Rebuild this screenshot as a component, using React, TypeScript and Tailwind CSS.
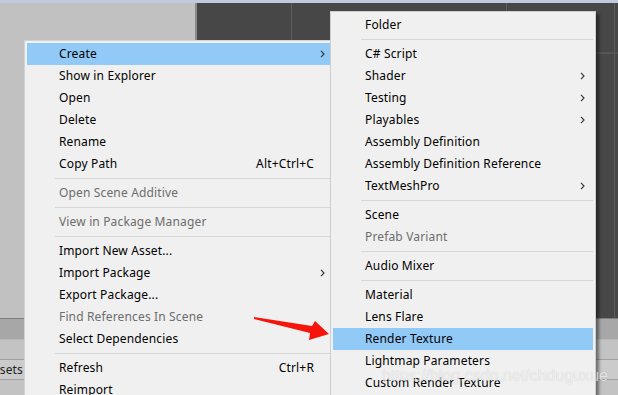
import React from 'react';

type Item =
  | 'sep'
  | {
      label: string;
      shortcut?: string;
      sub?: boolean;
      disabled?: boolean;
      active?: boolean;
    };

const mainItems: Item[] = [
  { label: 'Create', sub: true, active: true },
  { label: 'Show in Explorer' },
  { label: 'Open' },
  { label: 'Delete' },
  { label: 'Rename' },
  { label: 'Copy Path', shortcut: 'Alt+Ctrl+C' },
  'sep',
  { label: 'Open Scene Additive', disabled: true },
  'sep',
  { label: 'View in Package Manager', disabled: true },
  'sep',
  { label: 'Import New Asset...' },
  { label: 'Import Package', sub: true },
  { label: 'Export Package...' },
  { label: 'Find References In Scene', disabled: true },
  { label: 'Select Dependencies' },
  'sep',
  { label: 'Refresh', shortcut: 'Ctrl+R' },
  { label: 'Reimport' },
];

const createItems: Item[] = [
  { label: 'Folder' },
  'sep',
  { label: 'C# Script' },
  { label: 'Shader', sub: true },
  { label: 'Testing', sub: true },
  { label: 'Playables', sub: true },
  { label: 'Assembly Definition' },
  { label: 'Assembly Definition Reference' },
  { label: 'TextMeshPro', sub: true },
  'sep',
  { label: 'Scene' },
  { label: 'Prefab Variant', disabled: true },
  'sep',
  { label: 'Audio Mixer' },
  'sep',
  { label: 'Material' },
  { label: 'Lens Flare' },
  { label: 'Render Texture', active: true },
  { label: 'Lightmap Parameters' },
  { label: 'Custom Render Texture' },
];

const Chevron = () => (
  <svg width="5" height="8" viewBox="0 0 5 8">
    <path d="M1 0.8 L4 4 L1 7.2" fill="none" stroke="#3a3a3a" strokeWidth="1.2" />
  </svg>
);

const MenuList = ({ items, slot }: { items: Item[]; slot: string }) => (
  <div className="flex flex-col">
    {items.map((item, i) =>
      item === 'sep' ? (
        <div key={i} className="h-[7px] flex items-center pl-[28px]">
          <div className="h-px w-full bg-[#d7d7d7]" />
        </div>
      ) : (
        <div
          key={i}
          className={`h-[22px] flex items-center pl-[32px] leading-[22px] ${
            item.active ? 'bg-[#91c9f7]' : ''
          } ${item.disabled ? 'text-[#6d6d6d]' : 'text-black'}`}
        >
          <span className="flex-1 whitespace-nowrap">{item.label}</span>
          {item.shortcut && <span className="whitespace-nowrap">{item.shortcut}</span>}
          <span className={`${slot} flex items-center`}>{item.sub && <Chevron />}</span>
        </div>
      )
    )}
  </div>
);

export default function App() {
  return (
    <div className="relative w-[618px] h-[395px] overflow-hidden bg-[#c3c3c3] font-['Noto_Sans',sans-serif] text-[12px] tracking-[0.15px]">
      {/* editor background */}
      <div className="h-[3px] bg-[#c1c9dd]" />
      <div className="flex h-[315px]">
        <div className="w-[197px] bg-[#c1c1c1] border-r-2 border-[#8a8a8a]" />
        <div className="relative flex-1 bg-[#474747]">
          <div className="absolute left-[94px] top-0 bottom-0 w-px bg-[#5e5e5e]" />
          <div className="absolute left-[309px] top-0 bottom-0 w-px bg-[#5e5e5e]" />
          <div className="absolute left-[417px] top-0 bottom-0 w-px bg-[#5e5e5e]" />
          <div className="absolute left-0 right-0 top-[49px] h-[2px] bg-[#555555]" />
        </div>
      </div>
      <div className="h-px bg-[#7e7e7e]" />
      <div className="h-[21px] bg-[#a7a7a7] border-b border-[#b9b9b9]" />
      <div className="h-[20px] bg-[#c3c3c3] border-b border-[#a0a0a0]" />
      <div className="h-[20px] bg-[#cbcbcb] border-b border-[#a0a0a0] flex">
        <div className="w-[23px] overflow-hidden flex justify-end leading-[20px] text-[#222] text-[12px]">
          <span className="whitespace-nowrap">Assets</span>
        </div>
      </div>

      {/* context menu */}
      <div className="absolute left-[24px] top-[40px] w-[312px] h-[400px] bg-[#f0f0f0] border border-[#d2d2d2] p-[2px]">
        <MenuList items={mainItems} slot="w-[19px] pl-[6px]" />
      </div>

      {/* Create submenu */}
      <div className="absolute left-[330px] top-[11px] w-[266px] h-[400px] bg-[#f0f0f0] border border-[#cfcfcf] p-[2px] shadow-[3px_3px_3px_rgba(0,0,0,0.45)]">
        <MenuList items={createItems} slot="w-[13px]" />
      </div>

      {/* annotation arrow */}
      <svg className="absolute left-0 top-0" width="618" height="395">
        <polygon
          points="254,317 312,326 315,321 329,334 309,340 310,333 254,319"
          fill="#f5150a"
        />
      </svg>

      {/* watermark */}
      <div className="absolute right-[10px] top-[366px] text-[16px] leading-[19px] tracking-normal font-['Liberation_Sans',sans-serif] text-white/70 [text-shadow:0_0_1px_rgba(0,0,0,0.2)] whitespace-nowrap">
        https://blog.csdn.net/chduguxue
      </div>
    </div>
  );
}
